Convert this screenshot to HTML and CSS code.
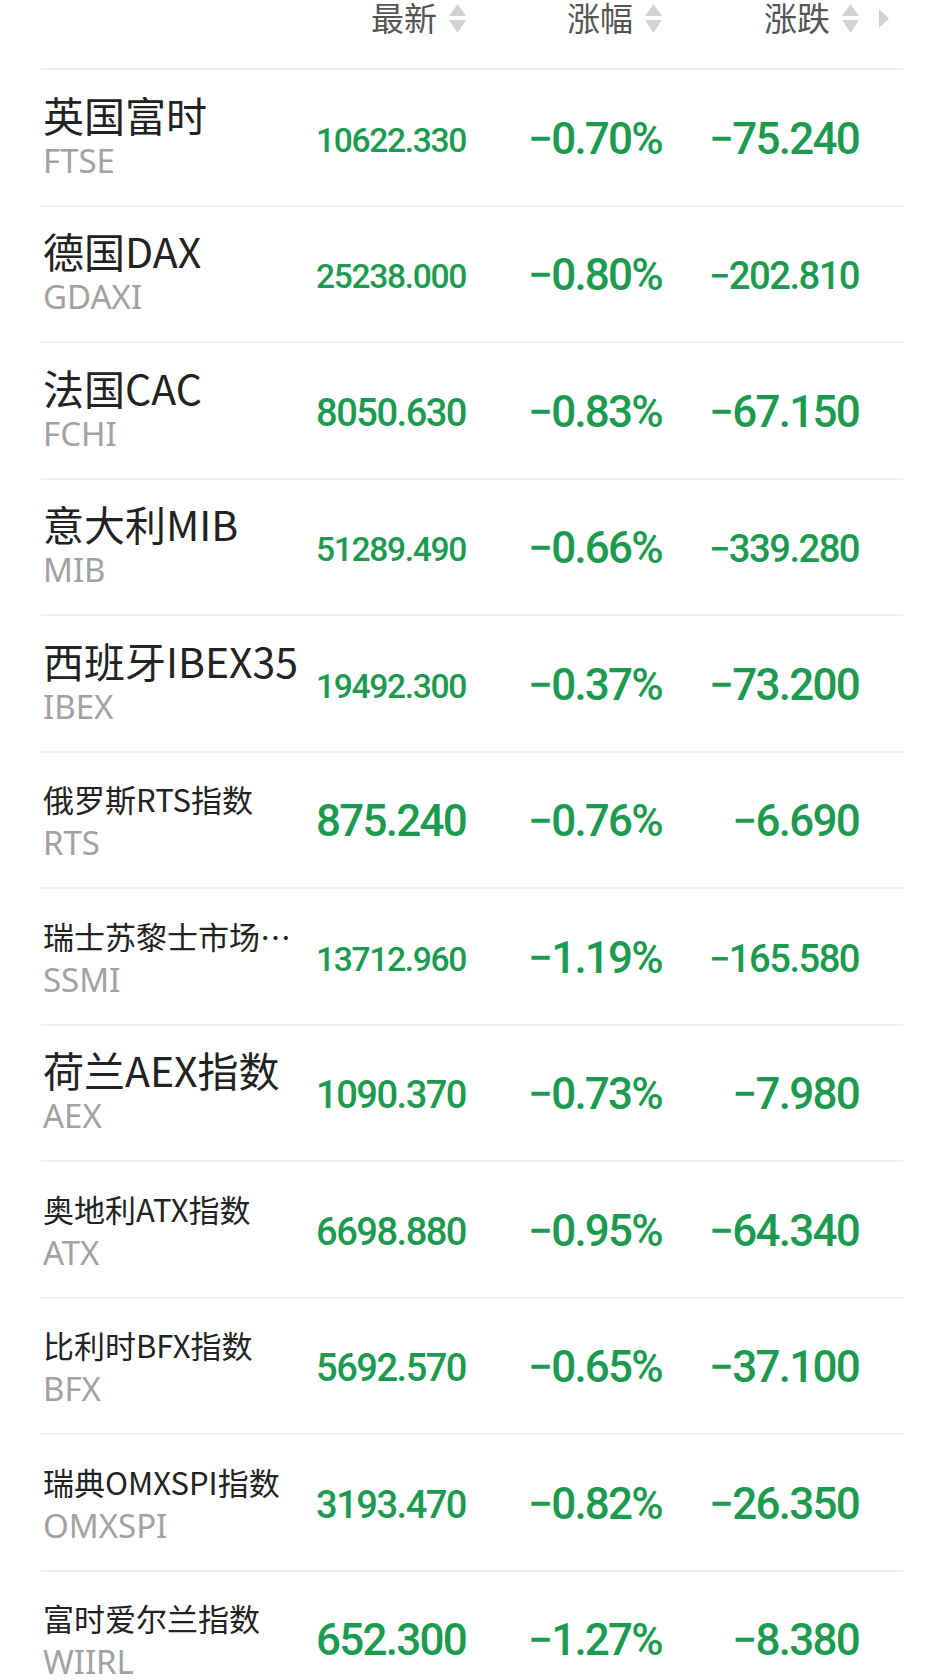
FILE: index.html
```html
<!DOCTYPE html>
<html lang="zh-CN">
<head>
    <meta charset="UTF-8">
    <meta name="viewport" content="width=device-width, initial-scale=1.0">
    <title>欧洲股指</title>
    <link rel="stylesheet" href="styles.css">
</head>
<body>
    <div class="market-list">
        <div class="list-header">
            <div class="col-name"></div>
            <div class="col-sort">最新
                <svg class="sort-icon" viewBox="0 0 17 29"><path d="M8.5 0 L17 12 L0 12 Z M0 16 L17 16 L8.5 29 Z"/></svg>
            </div>
            <div class="col-sort">涨幅
                <svg class="sort-icon" viewBox="0 0 17 29"><path d="M8.5 0 L17 12 L0 12 Z M0 16 L17 16 L8.5 29 Z"/></svg>
            </div>
            <div class="col-sort">涨跌
                <svg class="sort-icon" viewBox="0 0 17 29"><path d="M8.5 0 L17 12 L0 12 Z M0 16 L17 16 L8.5 29 Z"/></svg>
            </div>
            <div class="col-more">
                <svg class="more-icon" viewBox="0 0 10 19"><path d="M0 0 L10 9.5 L0 19 Z"/></svg>
            </div>
        </div>
        <div id="rows"></div>
    </div>

    <script>
        const indices = [
            { name: '英国富时', code: 'FTSE', price: '10622.330', pct: '−0.70%', chg: '−75.240' },
            { name: '德国DAX', code: 'GDAXI', price: '25238.000', pct: '−0.80%', chg: '−202.810' },
            { name: '法国CAC', code: 'FCHI', price: '8050.630', pct: '−0.83%', chg: '−67.150' },
            { name: '意大利MIB', code: 'MIB', price: '51289.490', pct: '−0.66%', chg: '−339.280' },
            { name: '西班牙IBEX35', code: 'IBEX', price: '19492.300', pct: '−0.37%', chg: '−73.200' },
            { name: '俄罗斯RTS指数', code: 'RTS', price: '875.240', pct: '−0.76%', chg: '−6.690' },
            { name: '瑞士苏黎士市场指数', code: 'SSMI', price: '13712.960', pct: '−1.19%', chg: '−165.580' },
            { name: '荷兰AEX指数', code: 'AEX', price: '1090.370', pct: '−0.73%', chg: '−7.980' },
            { name: '奥地利ATX指数', code: 'ATX', price: '6698.880', pct: '−0.95%', chg: '−64.340' },
            { name: '比利时BFX指数', code: 'BFX', price: '5692.570', pct: '−0.65%', chg: '−37.100' },
            { name: '瑞典OMXSPI指数', code: 'OMXSPI', price: '3193.470', pct: '−0.82%', chg: '−26.350' },
            { name: '富时爱尔兰指数', code: 'WIIRL', price: '652.300', pct: '−1.27%', chg: '−8.380' }
        ];

        const container = document.getElementById('rows');
        container.innerHTML = indices.map(item => `
            <div class="index-row">
                <div class="col-name">
                    <div class="index-name">${item.name}</div>
                    <div class="index-code">${item.code}</div>
                </div>
                <div class="num"><span>${item.price}</span></div>
                <div class="num"><span>${item.pct}</span></div>
                <div class="num"><span>${item.chg}</span></div>
                <div></div>
            </div>
        `).join('');

        // Long names drop to the small size, then get cut with an ellipsis
        container.querySelectorAll('.index-name').forEach(el => {
            if (el.scrollWidth > el.clientWidth) el.classList.add('small');
        });

        // Shrink numbers until they fit the column
        container.querySelectorAll('.num span').forEach(el => {
            const maxWidth = 150;
            const width = el.getBoundingClientRect().width;
            if (width > maxWidth) {
                const size = parseFloat(getComputedStyle(el).fontSize);
                el.style.fontSize = (size * maxWidth / width).toFixed(1) + 'px';
            }
        });
    </script>
</body>
</html>
```

FILE: styles.css
```css
body {
    margin: 0;
    padding: 0;
    background-color: #fff;
    font-family: "Noto Sans CJK SC", "Noto Sans", sans-serif;
    overflow: hidden;
}
.market-list {
    margin: 0 42px 0 41px;
}
.list-header,
.index-row {
    display: grid;
    grid-template-columns: 265px 160px 196px 197px 1fr;
    border-bottom: 2px solid #efefef;
    box-sizing: border-box;
}
.list-header {
    height: 70px;
    align-items: start;
}
.col-sort {
    display: flex;
    justify-content: flex-end;
    align-items: center;
    gap: 12px;
    height: 34px;
    font-size: 33px;
    line-height: 34px;
    color: #555;
}
.sort-icon {
    width: 17px;
    height: 29px;
    fill: #d2d2d2;
    margin-top: 3px;
}
.col-more {
    display: flex;
    justify-content: flex-end;
    align-items: center;
    height: 34px;
    padding-right: 14px;
}
.more-icon {
    width: 10px;
    height: 19px;
    fill: #d2d2d2;
    margin-top: 3px;
}
.index-row {
    height: 136.5px;
    align-items: center;
}
.index-row .col-name {
    padding-left: 2px;
    min-width: 0;
    margin-top: -6px;
}
.index-name {
    height: 50px;
    font-size: 41px;
    line-height: 50px;
    color: #222;
    white-space: nowrap;
    overflow: hidden;
    text-overflow: ellipsis;
}
.index-name.small {
    font-size: 31px;
    line-height: 56px;
}
.index-code {
    height: 38px;
    margin-top: 3px;
    font-family: "Noto Sans", sans-serif;
    font-size: 33px;
    line-height: 38px;
    color: #a2a2a2;
}
.num {
    text-align: right;
    white-space: nowrap;
    font-family: Roboto, sans-serif;
    font-weight: 500;
    color: #1c9a50;
    line-height: 50px;
    margin-top: 13px;
}
.num span {
    font-size: 44px;
    letter-spacing: -0.04em;
}
```
